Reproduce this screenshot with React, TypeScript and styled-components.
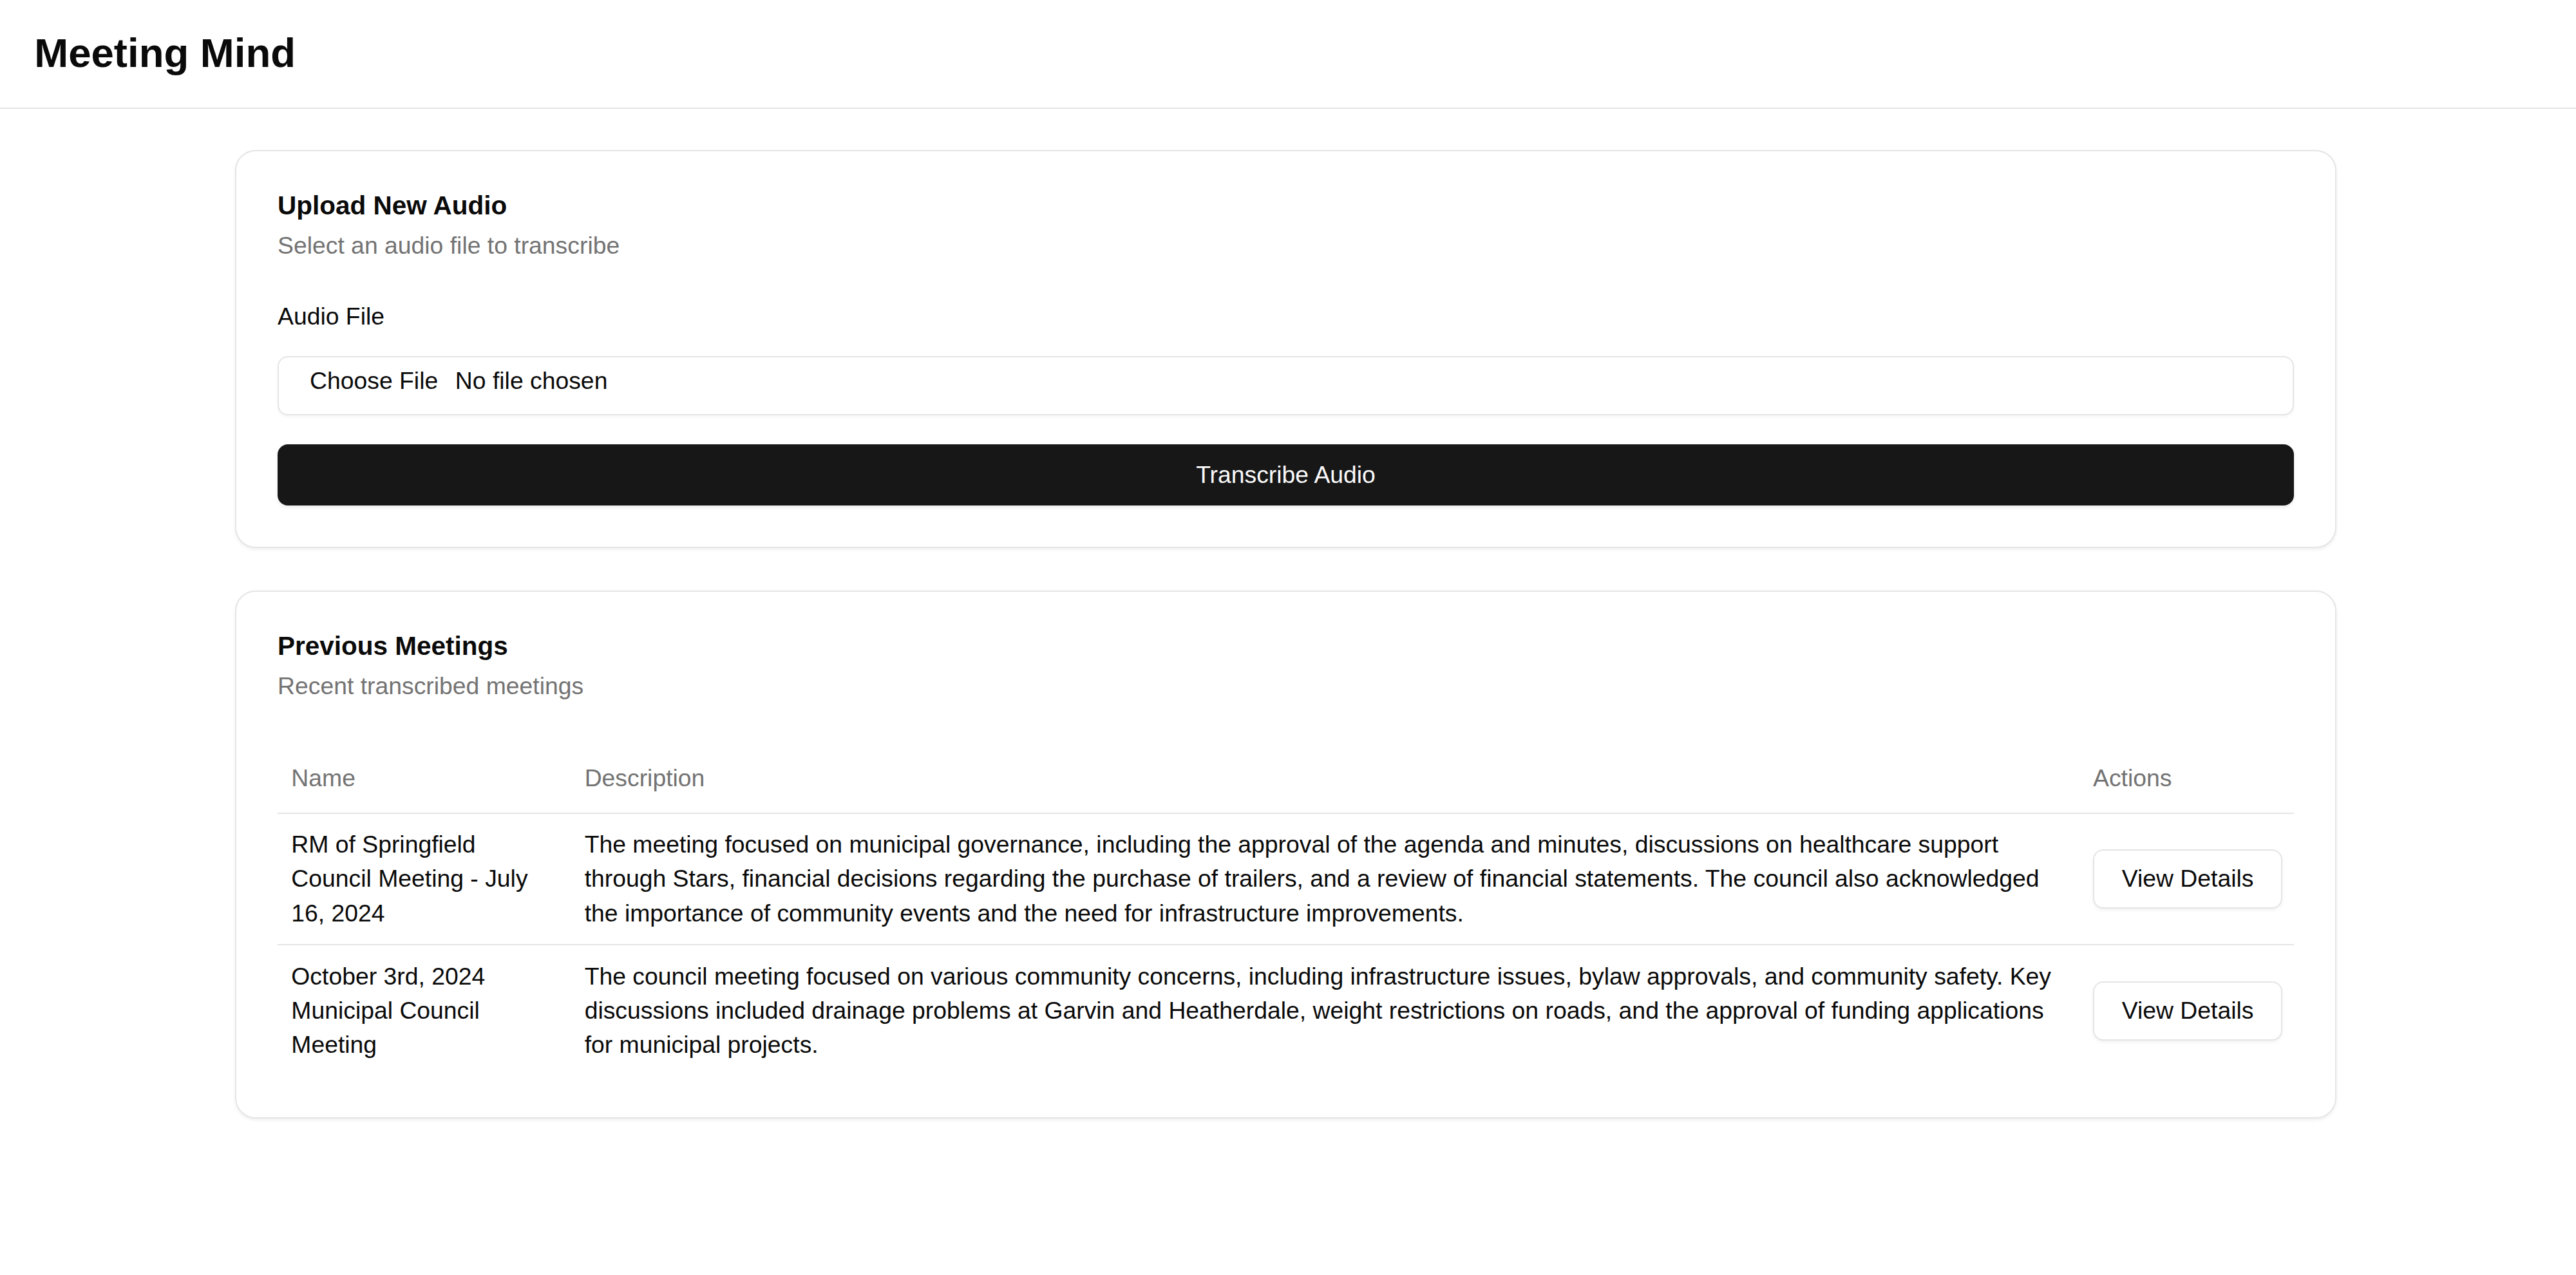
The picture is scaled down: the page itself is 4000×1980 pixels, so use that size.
import React from "react";
import styled, { createGlobalStyle } from "styled-components";

const GlobalStyle = createGlobalStyle`
  html, body {
    margin: 0;
    padding: 0;
    background: #ffffff;
  }
  body {
    font-family: "Liberation Sans", Arial, Helvetica, sans-serif;
    color: #0a0a0a;
    -webkit-font-smoothing: antialiased;
  }
  * { box-sizing: border-box; }
`;

const TEXT = "37.33px";

const Page = styled.div`
  min-height: 1980px;
  background: #ffffff;
`;

const TopBar = styled.header`
  padding: 40px 53.33px 42px;
  border-bottom: 2.67px solid #e5e5e5;
`;

const AppTitle = styled.h1`
  margin: 0;
  font-size: 63.5px;
  line-height: 85.33px;
  font-weight: 700;
  color: #0a0a0a;
`;

const Main = styled.main`
  width: 3263px;
  margin: 64px 0 0 365px;
  display: flex;
  flex-direction: column;
  gap: 66px;
`;

const Card = styled.section`
  background: #ffffff;
  border: 2.67px solid #e5e5e5;
  border-radius: 32px;
  padding: 64px;
  box-shadow: 0 2.67px 5.33px rgba(0, 0, 0, 0.06);
`;

const CardHeader = styled.div`
  display: flex;
  flex-direction: column;
  gap: 16px;
`;

const CardTitle = styled.h2`
  margin: 0;
  font-size: 40.5px;
  line-height: 40px;
  font-weight: 700;
  color: #0a0a0a;
`;

const CardDescription = styled.p`
  margin: 0;
  font-size: ${TEXT};
  line-height: 53.33px;
  color: #737373;
`;

const CardContent = styled.div`
  margin-top: 64px;
  display: flex;
  flex-direction: column;
`;

const FieldLabel = styled.label`
  display: block;
  font-size: ${TEXT};
  line-height: 36px;
  color: #0a0a0a;
`;

const FileField = styled.label`
  margin-top: 44px;
  height: 92.5px;
  display: flex;
  align-items: flex-start;
  padding: 10.67px 32px;
  border: 2.67px solid #e5e5e5;
  border-radius: 16px;
  background: #ffffff;
  box-shadow: 0 2.67px 5.33px rgba(0, 0, 0, 0.04);
  font-size: ${TEXT};
  line-height: 53.33px;
  cursor: pointer;
`;

const HiddenInput = styled.input`
  position: absolute;
  width: 1px;
  height: 1px;
  opacity: 0;
  pointer-events: none;
`;

const FileButton = styled.span`
  padding: 0 16px;
  margin-right: 10.67px;
  color: #0a0a0a;
`;

const FileName = styled.span`
  color: #0a0a0a;
`;

const PrimaryButton = styled.button`
  margin-top: 45px;
  width: 100%;
  height: 94.5px;
  border: 0;
  border-radius: 16px;
  background: #171717;
  color: #fafafa;
  font-family: inherit;
  font-size: ${TEXT};
  line-height: 53.33px;
  display: flex;
  align-items: center;
  justify-content: center;
  box-shadow: 0 2.67px 5.33px rgba(0, 0, 0, 0.08);
  cursor: pointer;
`;

const Table = styled.table`
  width: 100%;
  border-collapse: collapse;
  table-layout: fixed;
  font-size: ${TEXT};
  line-height: 53.33px;
`;

const Col = styled.col<{ $w?: number }>`
  width: ${(p) => (p.$w ? `${p.$w}px` : "auto")};
`;

const HeadRow = styled.tr`
  border-bottom: 2.67px solid #e5e5e5;
`;

const HeadCell = styled.th`
  height: 106.67px;
  padding: 0 21.33px;
  text-align: left;
  vertical-align: middle;
  font-weight: 400;
  color: #737373;
`;

const BodyRow = styled.tr`
  border-bottom: 2.67px solid #e5e5e5;
  &:last-child {
    border-bottom: 0;
  }
`;

const Cell = styled.td`
  padding: 21.33px;
  vertical-align: middle;
  color: #0a0a0a;
`;

const OutlineButton = styled.button`
  height: 92px;
  padding: 0 42.67px;
  border: 2.67px solid #e5e5e5;
  border-radius: 16px;
  background: #ffffff;
  color: #0a0a0a;
  font-family: inherit;
  font-size: ${TEXT};
  line-height: 53.33px;
  white-space: nowrap;
  box-shadow: 0 2.67px 5.33px rgba(0, 0, 0, 0.05);
  cursor: pointer;
`;

const meetings = [
  {
    name: "RM of Springfield Council Meeting - July 16, 2024",
    description:
      "The meeting focused on municipal governance, including the approval of the agenda and minutes, discussions on healthcare support through Stars, financial decisions regarding the purchase of trailers, and a review of financial statements. The council also acknowledged the importance of community events and the need for infrastructure improvements.",
  },
  {
    name: "October 3rd, 2024 Municipal Council Meeting",
    description:
      "The council meeting focused on various community concerns, including infrastructure issues, bylaw approvals, and community safety. Key discussions included drainage problems at Garvin and Heatherdale, weight restrictions on roads, and the approval of funding applications for municipal projects.",
  },
];

export default function App() {
  return (
    <Page>
      <GlobalStyle />
      <TopBar>
        <AppTitle>Meeting Mind</AppTitle>
      </TopBar>
      <Main>
        <Card>
          <CardHeader>
            <CardTitle>Upload New Audio</CardTitle>
            <CardDescription>Select an audio file to transcribe</CardDescription>
          </CardHeader>
          <CardContent>
            <FieldLabel htmlFor="audio-file">Audio File</FieldLabel>
            <FileField>
              <HiddenInput id="audio-file" type="file" accept="audio/*" />
              <FileButton>Choose File</FileButton>
              <FileName>No file chosen</FileName>
            </FileField>
            <PrimaryButton type="button">Transcribe Audio</PrimaryButton>
          </CardContent>
        </Card>

        <Card>
          <CardHeader>
            <CardTitle>Previous Meetings</CardTitle>
            <CardDescription>Recent transcribed meetings</CardDescription>
          </CardHeader>
          <CardContent>
            <Table>
              <colgroup>
                <Col $w={455.3} />
                <Col />
                <Col $w={333.3} />
              </colgroup>
              <thead>
                <HeadRow>
                  <HeadCell>Name</HeadCell>
                  <HeadCell>Description</HeadCell>
                  <HeadCell>Actions</HeadCell>
                </HeadRow>
              </thead>
              <tbody>
                {meetings.map((m) => (
                  <BodyRow key={m.name}>
                    <Cell>{m.name}</Cell>
                    <Cell>{m.description}</Cell>
                    <Cell>
                      <OutlineButton type="button">View Details</OutlineButton>
                    </Cell>
                  </BodyRow>
                ))}
              </tbody>
            </Table>
          </CardContent>
        </Card>
      </Main>
    </Page>
  );
}
